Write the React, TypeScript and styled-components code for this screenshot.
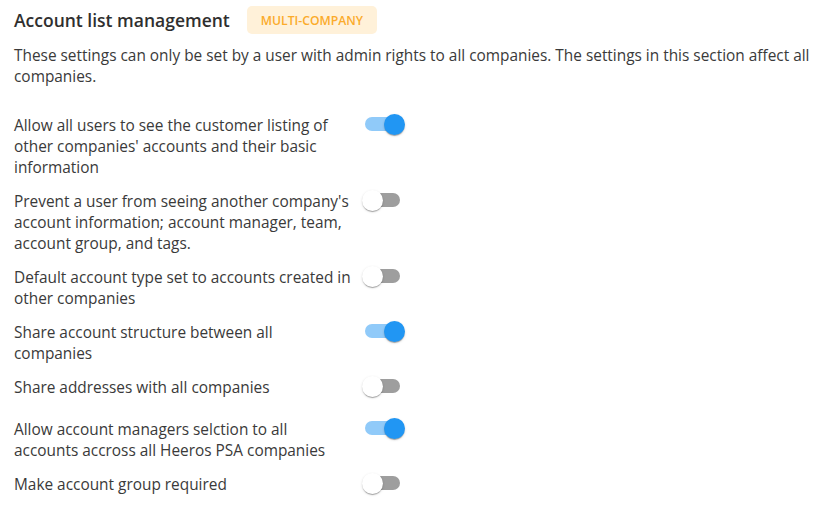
import React, { useState } from "react";
import styled, { createGlobalStyle } from "styled-components";

const GlobalStyle = createGlobalStyle`
  html, body {
    margin: 0;
    padding: 0;
    background: #ffffff;
  }
  body {
    font-family: "Open Sans", "Noto Sans", sans-serif;
    color: #3a3a3a;
  }
`;

const Page = styled.div`
  width: 826px;
  box-sizing: border-box;
  padding: 6px 14px 0 14px;
`;

const Header = styled.div`
  display: flex;
  align-items: center;
  height: 28px;
`;

const Title = styled.h2`
  margin: 0;
  font-size: 17.5px;
  font-weight: 600;
  color: #2f2f2f;
  line-height: 28px;
`;

const Badge = styled.span`
  margin-left: 17px;
  height: 28px;
  display: inline-flex;
  align-items: center;
  padding: 0 14px;
  border-radius: 5px;
  background: #fff1d9;
  color: #fbab2b;
  font-size: 12.2px;
  font-weight: 600;
  text-transform: uppercase;
`;

const Description = styled.p`
  margin: 11px 0 0 0;
  font-size: 15.4px;
  line-height: 21px;
  color: #3a3a3a;
`;

const List = styled.div`
  margin-top: 28px;
  display: flex;
  flex-direction: column;
  gap: 13px;
`;

const Row = styled.div`
  display: flex;
  align-items: flex-start;
`;

const Label = styled.div`
  flex: none;
  width: 338px;
  font-size: 15.4px;
  line-height: 21px;
  color: #3a3a3a;
`;

const SwitchRoot = styled.button`
  flex: none;
  position: relative;
  margin-left: 8px;
  width: 46px;
  height: 29px;
  padding: 0;
  border: none;
  background: transparent;
  cursor: pointer;
`;

const Track = styled.span<{ $on: boolean }>`
  position: absolute;
  left: 5px;
  top: 2px;
  width: 35px;
  height: 14px;
  border-radius: 7px;
  background: ${(p) => (p.$on ? "#90caf9" : "#9e9e9e")};
`;

const Thumb = styled.span<{ $on: boolean }>`
  position: absolute;
  top: -1.5px;
  left: ${(p) => (p.$on ? "23.5px" : "1.5px")};
  width: 21px;
  height: 21px;
  border-radius: 50%;
  background: ${(p) => (p.$on ? "#2196f3" : "#ffffff")};
  box-shadow: 0 2px 1px -1px rgba(0, 0, 0, 0.2), 0 1px 1px 0 rgba(0, 0, 0, 0.14),
    0 1px 3px 0 rgba(0, 0, 0, 0.12);
  transition: left 0.15s ease;
`;

interface ToggleProps {
  checked: boolean;
  onChange: () => void;
}

const Toggle: React.FC<ToggleProps> = ({ checked, onChange }) => (
  <SwitchRoot type="button" role="switch" aria-checked={checked} onClick={onChange}>
    <Track $on={checked} />
    <Thumb $on={checked} />
  </SwitchRoot>
);

const initialSettings = [
  {
    label:
      "Allow all users to see the customer listing of other companies' accounts and their basic information",
    on: true,
  },
  {
    label:
      "Prevent a user from seeing another company's account information; account manager, team, account group, and tags.",
    on: false,
  },
  {
    label: "Default account type set to accounts created in other companies",
    on: false,
  },
  { label: "Share account structure between all companies", on: true },
  { label: "Share addresses with all companies", on: false },
  {
    label: "Allow account managers selction to all accounts accross all Heeros PSA companies",
    on: true,
  },
  { label: "Make account group required", on: false },
];

const App: React.FC = () => {
  const [settings, setSettings] = useState(initialSettings);

  const toggle = (index: number) => {
    setSettings((prev) => prev.map((s, i) => (i === index ? { ...s, on: !s.on } : s)));
  };

  return (
    <Page>
      <GlobalStyle />
      <Header>
        <Title>Account list management</Title>
        <Badge>Multi-company</Badge>
      </Header>
      <Description>
        These settings can only be set by a user with admin rights to all companies. The settings in
        this section affect all companies.
      </Description>
      <List>
        {settings.map((s, i) => (
          <Row key={s.label}>
            <Label>{s.label}</Label>
            <Toggle checked={s.on} onChange={() => toggle(i)} />
          </Row>
        ))}
      </List>
    </Page>
  );
};

export default App;
